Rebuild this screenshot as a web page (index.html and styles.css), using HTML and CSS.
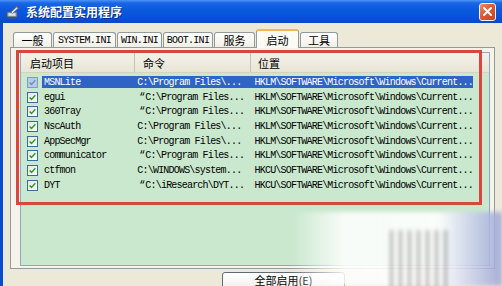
FILE: index.html
```html
<!DOCTYPE html>
<html lang="zh-CN">
<head>
<meta charset="utf-8">
<title>系统配置实用程序</title>
<link rel="stylesheet" href="styles.css">
</head>
<body>
<div class="win">
  <div class="titlebar">
    <svg class="appicon" viewBox="0 0 14 14" width="14" height="14">
      <rect x="1" y="7" width="10" height="5" fill="#9aa4b0" stroke="#4a5568" stroke-width="0.8"/>
      <rect x="2.5" y="8.2" width="7" height="2.6" fill="#d9e2ec"/>
      <path d="M3 13h7" stroke="#4a5568" stroke-width="1"/>
      <path d="M5 7 L11 1.5 L12.5 3 L6.5 8.5 Z" fill="#e9e9e9" stroke="#55606e" stroke-width="0.7"/>
      <path d="M11 1.5 L12.5 3" stroke="#c0392b" stroke-width="1.2"/>
    </svg>
    <span class="title">系统配置实用程序</span>
    <div class="close">
      <svg viewBox="0 0 17 17" width="15" height="15"><path d="M4.5 4.5 L12.5 12.5 M12.5 4.5 L4.5 12.5" stroke="#fff" stroke-width="2.2" stroke-linecap="round"/></svg>
    </div>
  </div>
  <div class="client">
    <div class="tabs">
      <div class="tab cjk w39">一般</div>
      <div class="tab w63">SYSTEM.INI</div>
      <div class="tab w45">WIN.INI</div>
      <div class="tab w50">BOOT.INI</div>
      <div class="tab cjk w41">服务</div>
      <div class="tab cjk active w43">启动</div>
      <div class="tab cjk w38">工具</div>
    </div>
    <div class="panel">
      <div class="list">
        <div class="lhead">
          <div class="hc c1">启动项目</div>
          <div class="hc c2">命令</div>
          <div class="hc c3">位置</div>
        </div>
        <div class="rows">
          <div class="row sel">
            <div class="chkcell"><span class="chk"><svg viewBox="0 0 11 11" width="9" height="9"><path d="M2 5.5 L4.3 7.8 L9 2.8" fill="none" stroke="#6d8fb9" stroke-width="1.8"/></svg></span></div>
            <div class="cells"><span class="n">MSNLite</span><span class="m">C:\Program Files\...</span><span class="l">HKLM\SOFTWARE\Microsoft\Windows\Current...</span></div>
          </div>
          <div class="row">
            <div class="chkcell"><span class="chk"><svg viewBox="0 0 11 11" width="9" height="9"><path d="M2 5.5 L4.3 7.8 L9 2.8" fill="none" stroke="#21a121" stroke-width="1.8"/></svg></span></div>
            <div class="cells"><span class="n">egui</span><span class="m"><span class="q">“</span>C:\Program Files...</span><span class="l">HKLM\SOFTWARE\Microsoft\Windows\Current...</span></div>
          </div>
          <div class="row">
            <div class="chkcell"><span class="chk"><svg viewBox="0 0 11 11" width="9" height="9"><path d="M2 5.5 L4.3 7.8 L9 2.8" fill="none" stroke="#21a121" stroke-width="1.8"/></svg></span></div>
            <div class="cells"><span class="n">360Tray</span><span class="m"><span class="q">“</span>C:\Program Files...</span><span class="l">HKLM\SOFTWARE\Microsoft\Windows\Current...</span></div>
          </div>
          <div class="row">
            <div class="chkcell"><span class="chk"><svg viewBox="0 0 11 11" width="9" height="9"><path d="M2 5.5 L4.3 7.8 L9 2.8" fill="none" stroke="#21a121" stroke-width="1.8"/></svg></span></div>
            <div class="cells"><span class="n">NscAuth</span><span class="m">C:\Program Files\...</span><span class="l">HKLM\SOFTWARE\Microsoft\Windows\Current...</span></div>
          </div>
          <div class="row">
            <div class="chkcell"><span class="chk"><svg viewBox="0 0 11 11" width="9" height="9"><path d="M2 5.5 L4.3 7.8 L9 2.8" fill="none" stroke="#21a121" stroke-width="1.8"/></svg></span></div>
            <div class="cells"><span class="n">AppSecMgr</span><span class="m">C:\Program Files\...</span><span class="l">HKLM\SOFTWARE\Microsoft\Windows\Current...</span></div>
          </div>
          <div class="row">
            <div class="chkcell"><span class="chk"><svg viewBox="0 0 11 11" width="9" height="9"><path d="M2 5.5 L4.3 7.8 L9 2.8" fill="none" stroke="#21a121" stroke-width="1.8"/></svg></span></div>
            <div class="cells"><span class="n">communicator</span><span class="m"><span class="q">“</span>C:\Program Files...</span><span class="l">HKLM\SOFTWARE\Microsoft\Windows\Current...</span></div>
          </div>
          <div class="row">
            <div class="chkcell"><span class="chk"><svg viewBox="0 0 11 11" width="9" height="9"><path d="M2 5.5 L4.3 7.8 L9 2.8" fill="none" stroke="#21a121" stroke-width="1.8"/></svg></span></div>
            <div class="cells"><span class="n">ctfmon</span><span class="m">C:\WINDOWS\system...</span><span class="l">HKCU\SOFTWARE\Microsoft\Windows\Current...</span></div>
          </div>
          <div class="row">
            <div class="chkcell"><span class="chk"><svg viewBox="0 0 11 11" width="9" height="9"><path d="M2 5.5 L4.3 7.8 L9 2.8" fill="none" stroke="#21a121" stroke-width="1.8"/></svg></span></div>
            <div class="cells"><span class="n">DYT</span><span class="m"><span class="q">“</span>C:\iResearch\DYT...</span><span class="l">HKCU\SOFTWARE\Microsoft\Windows\Current...</span></div>
          </div>
        </div>
      </div>
      <div class="redbox"></div>
    </div>
    <div class="buttons">
      <div class="btn">全部启用(E)</div>
    </div>
  </div>
  <div class="watermark"><div class="bars"></div></div>
</div>
</body>
</html>
```

FILE: styles.css
```css
html, body {
  margin: 0;
  padding: 0;
}
body {
  width: 502px;
  height: 286px;
  overflow: hidden;
  background: #ece9d8;
  font-family: "Liberation Mono", monospace;
}
.win {
  position: relative;
  width: 502px;
  height: 286px;
  overflow: hidden;
}
.titlebar {
  height: 23px;
  display: flex;
  align-items: center;
  padding-left: 6px;
  background: linear-gradient(#4a95f5 0, #1a66e6 3px, #0b5ade 40%, #0553d8 75%, #0a48c6 100%);
}
.appicon {
  width: 14px;
  height: 14px;
  margin-right: 6px;
  flex: none;
}
.title {
  flex: 1;
  color: #fff;
  font: bold 12px "Noto Sans CJK SC", sans-serif;
  line-height: 14px;
  text-shadow: 1px 1px 0 #0a2d8a;
}
.close {
  width: 15px;
  height: 16px;
  margin-right: 6px;
  border: 1px solid #f2f2f2;
  border-radius: 3px;
  background: linear-gradient(135deg, #f08c68 0%, #df5a34 45%, #c8401c 100%);
  display: flex;
  align-items: center;
  justify-content: center;
}
.client {
  height: 263px;
  border-left: 3px solid #0b4bd4;
  display: flex;
  flex-direction: column;
}
.client > * {
  flex: none;
}
.tabs {
  height: 25px;
  display: flex;
  align-items: flex-end;
  gap: 1px;
  padding-left: 10px;
  margin-bottom: -1px;
  position: relative;
  z-index: 1;
}
.tab {
  height: 15px;
  margin-bottom: 1px;
  box-sizing: border-box;
  border: 1px solid #919b9c;
  border-bottom: none;
  border-radius: 3px 3px 0 0;
  background: linear-gradient(#ffffff, #f1efe6);
  display: flex;
  align-items: center;
  justify-content: center;
  font-size: 10px;
  letter-spacing: -0.7px;
  color: #000;
}
.tab.cjk {
  font: 11px "Noto Sans CJK SC", sans-serif;
  letter-spacing: 0;
}
.tab.active {
  height: 19px;
  margin-bottom: 0;
  background: #fbfaf5;
  border-top: 2px solid #f3b557;
}
.w38 { width: 38px; }
.w39 { width: 39px; }
.w41 { width: 41px; }
.w43 { width: 43px; }
.w45 { width: 45px; }
.w50 { width: 50px; }
.w63 { width: 63px; }
.panel {
  position: relative;
  margin: 0 7px;
  border: 1px solid #919b9c;
  background: #f6f4ea;
  padding: 4px 4px 2px 9px;
}
.list {
  height: 214px;
  box-sizing: border-box;
  border: 1px solid #8fa7c2;
  background: #c9e8cd;
}
.lhead {
  height: 20px;
  display: flex;
  background: linear-gradient(#f4f2e9, #e8e5d6);
  border-bottom: 1px solid #d6d2c0;
  box-sizing: border-box;
}
.hc {
  display: flex;
  align-items: center;
  font: 11px "Noto Sans CJK SC", sans-serif;
  color: #000;
  box-sizing: border-box;
}
.c1 {
  width: 114px;
  padding-left: 9px;
  border-right: 1px solid #c5c2b0;
}
.c2 {
  width: 116px;
  padding-left: 8px;
  border-right: 1px solid #c5c2b0;
}
.c3 {
  flex: 1;
  padding-left: 7px;
}
.rows {
  padding-top: 2px;
}
.row {
  height: 14.7px;
  display: flex;
  align-items: center;
}
.chkcell {
  width: 21px;
  padding-left: 6px;
  box-sizing: border-box;
  display: flex;
  align-items: center;
}
.chk {
  width: 11px;
  height: 11px;
  box-sizing: border-box;
  border: 1px solid #3a6c9a;
  background: linear-gradient(135deg, #e6e6dc, #ffffff);
  display: flex;
  align-items: center;
  justify-content: center;
}
.sel .chk {
  background: #b8cbe6;
  border-color: #7e9cc4;
}
.cells {
  width: 431px;
  height: 12px;
  display: flex;
  align-items: center;
  font-size: 10px;
  letter-spacing: -0.8px;
  color: #000;
  white-space: nowrap;
}
.sel .cells {
  background: #2f63c4;
  color: #fff;
}
.n {
  width: 93px;
  padding-left: 2px;
  box-sizing: border-box;
}
.m {
  width: 116px;
  padding-left: 3px;
  box-sizing: border-box;
}
.l {
  flex: 1;
  padding-left: 5px;
}
.q {
  display: inline-block;
  width: 8px;
  text-align: right;
  letter-spacing: 0;
}
.redbox {
  position: absolute;
  left: 5px;
  top: 2px;
  width: 466px;
  height: 155px;
  box-sizing: border-box;
  border: 3px solid #d8463f;
  pointer-events: none;
}
.buttons {
  display: flex;
  padding-left: 219px;
  padding-top: 3px;
}
.btn {
  width: 123px;
  height: 22px;
  box-sizing: border-box;
  border: 1px solid #5f6a72;
  border-radius: 3px;
  background: linear-gradient(#ffffff, #ecebe6);
  font: 11px "Noto Sans CJK SC", sans-serif;
  color: #000;
  text-align: center;
  line-height: 15px;
}
.watermark {
  position: absolute;
  left: 290px;
  top: 212px;
  width: 212px;
  height: 74px;
  background:
    linear-gradient(to right, rgba(255,255,255,0) 0%, rgba(255,255,255,0.85) 25%, rgba(255,255,255,0.9) 70%, rgba(150,160,215,0.8) 100%);
  filter: blur(2px);
}
.bars {
  position: absolute;
  left: 100px;
  top: 18px;
  width: 60px;
  height: 60px;
  background: repeating-linear-gradient(90deg, rgba(110,110,110,0.55) 0 3px, rgba(255,255,255,0) 3px 9px);
}
```
